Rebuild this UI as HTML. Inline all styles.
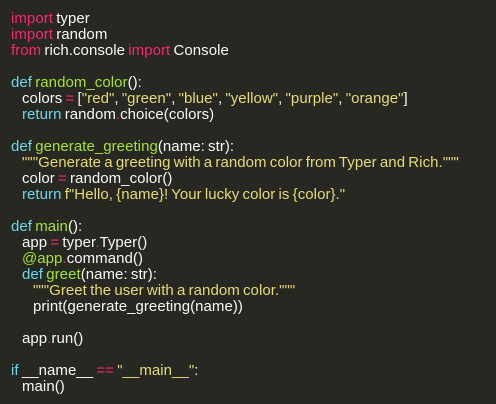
<!DOCTYPE html>
<html><head><meta charset="utf-8"><style>
html,body{margin:0;padding:0;background:#272822;width:496px;height:404px;overflow:hidden}
pre{margin:0;padding:11px 0 0 11px;font-family:"Liberation Sans","DejaVu Sans",sans-serif;font-size:15px;line-height:16px;color:#f8f8f2;letter-spacing:0.05px;word-spacing:-1px;white-space:pre}
i{display:inline-block;width:11px}
.k{color:#f92672}.d{color:#66d9ef}.f{color:#a6e22e}.s{color:#e6db74}
</style></head><body><pre><span class="k">import</span> typer
<span class="k">import</span> random
<span class="k">from</span> rich.console <span class="k">import</span> Console

<span class="d">def</span> <span class="f">random_color</span>():
<i></i>colors <span class="k">=</span> [<span class="s">"red"</span>, <span class="s">"green"</span>, <span class="s">"blue"</span>, <span class="s">"yellow"</span>, <span class="s">"purple"</span>, <span class="s">"orange"</span>]
<i></i><span class="d">return</span> random<span class="k">.</span>choice(colors)

<span class="d">def</span> <span class="f">generate_greeting</span>(name: str):
<i></i><span class="s">"""Generate a greeting with a random color from Typer and Rich."""</span>
<i></i>color <span class="k">=</span> random_color()
<i></i><span class="d">return</span> <span class="s">f"Hello, {name}! Your lucky color is {color}."</span>

<span class="d">def</span> <span class="f">main</span>():
<i></i>app <span class="k">=</span> typer<span class="k">.</span>Typer()
<i></i><span class="f">@app</span><span class="k">.</span>command()
<i></i><span class="d">def</span> <span class="f">greet</span>(name: str):
<i></i><i></i><span class="s">"""Greet the user with a random color."""</span>
<i></i><i></i>print(generate_greeting(name))

<i></i>app<span class="k">.</span>run()

<span class="d">if</span> __name__ <span class="k">==</span> <span class="s">"__main__"</span>:
<i></i>main()</pre></body></html>
